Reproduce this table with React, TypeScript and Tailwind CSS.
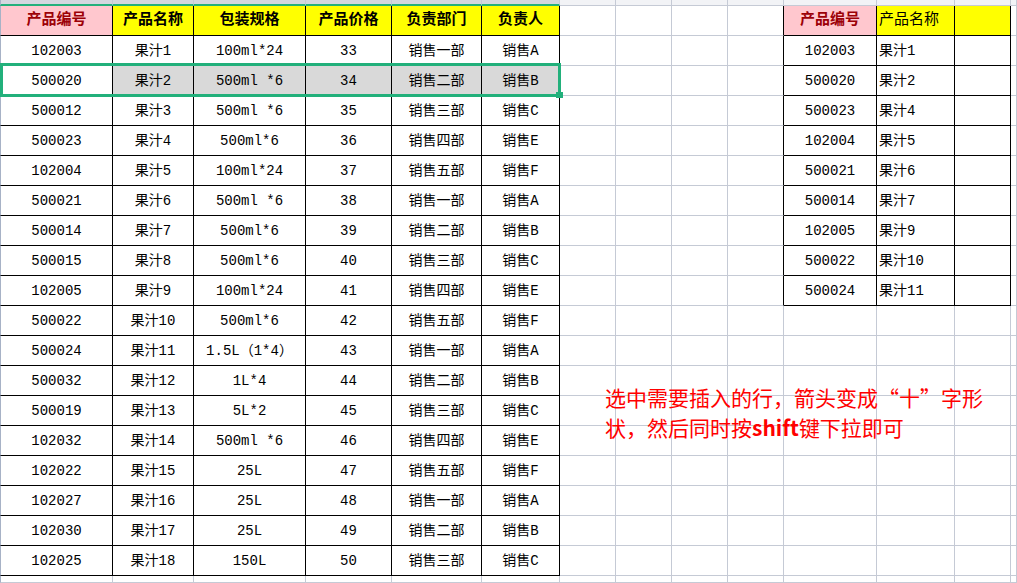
import React from "react";

const LEFT: string[][] = [
  ["102003", "果汁1", "100ml*24", "33", "销售一部", "销售A"],
  ["500020", "果汁2", "500ml *6", "34", "销售二部", "销售B"],
  ["500012", "果汁3", "500ml *6", "35", "销售三部", "销售C"],
  ["500023", "果汁4", "500ml*6", "36", "销售四部", "销售E"],
  ["102004", "果汁5", "100ml*24", "37", "销售五部", "销售F"],
  ["500021", "果汁6", "500ml *6", "38", "销售一部", "销售A"],
  ["500014", "果汁7", "500ml*6", "39", "销售二部", "销售B"],
  ["500015", "果汁8", "500ml*6", "40", "销售三部", "销售C"],
  ["102005", "果汁9", "100ml*24", "41", "销售四部", "销售E"],
  ["500022", "果汁10", "500ml*6", "42", "销售五部", "销售F"],
  ["500024", "果汁11", "1.5L（1*4）", "43", "销售一部", "销售A"],
  ["500032", "果汁12", "1L*4", "44", "销售二部", "销售B"],
  ["500019", "果汁13", "5L*2", "45", "销售三部", "销售C"],
  ["102032", "果汁14", "500ml *6", "46", "销售四部", "销售E"],
  ["102022", "果汁15", "25L", "47", "销售五部", "销售F"],
  ["102027", "果汁16", "25L", "48", "销售一部", "销售A"],
  ["102030", "果汁17", "25L", "49", "销售二部", "销售B"],
  ["102025", "果汁18", "150L", "50", "销售三部", "销售C"],
];

const RIGHT: string[][] = [
  ["102003", "果汁1"],
  ["500020", "果汁2"],
  ["500023", "果汁4"],
  ["102004", "果汁5"],
  ["500021", "果汁6"],
  ["500014", "果汁7"],
  ["102005", "果汁9"],
  ["500022", "果汁10"],
  ["500024", "果汁11"],
];

const HEAD = ["产品编号", "产品名称", "包装规格", "产品价格", "负责部门", "负责人"];

const NCOLS = 14;
const NROWS = 21;

function inTable(r: number, c: number) {
  if (r >= 1 && r <= 19 && c >= 0 && c <= 5) return true;
  if (r >= 1 && r <= 10 && c >= 10 && c <= 12) return true;
  return false;
}

function Cell({ r, c }: { r: number; c: number }) {
  const rBlack = inTable(r, c) || inTable(r, c + 1);
  let bBlack = inTable(r, c) || inTable(r + 1, c);
  const topStrip = r === 0;
  if (topStrip) bBlack = false;
  const greenBottom = topStrip && c <= 5;

  let bg = "bg-white";
  if (topStrip) bg = c <= 5 ? "bg-[#d3d7de]" : "bg-[#f2f3f6]";
  let content: React.ReactNode = null;
  let align = "justify-center";
  let text = "text-black";
  let weight = "font-normal";
  let size = "text-[14px]";

  if (r === 1 && c <= 5) {
    bg = c === 0 ? "bg-[#ffc7ce]" : "bg-[#ffff00]";
    text = c === 0 ? "text-[#9c0006]" : "text-black";
    weight = "font-bold";
    size = "text-[15px]";
    content = HEAD[c];
  } else if (r >= 2 && r <= 19 && c <= 5) {
    content = LEFT[r - 2][c];
    if (r === 3 && c >= 1) bg = "bg-[#d9d9d9]";
  } else if (r === 1 && c >= 10 && c <= 12) {
    if (c === 10) {
      bg = "bg-[#ffc7ce]";
      text = "text-[#9c0006]";
      weight = "font-bold";
      size = "text-[15px]";
      content = "产品编号";
    } else {
      bg = "bg-[#ffff00]";
      size = "text-[15px]";
      if (c === 11) {
        content = "产品名称";
        align = "justify-start pl-[2px]";
      }
    }
  } else if (r >= 2 && r <= 10 && c >= 10 && c <= 11) {
    content = RIGHT[r - 2][c - 10];
    if (c === 11) align = "justify-start pl-[2px]";
  }

  const cls = [
    "flex items-center overflow-visible whitespace-nowrap",
    align,
    bg,
    text,
    weight,
    size,
    "border-r",
    rBlack ? "border-r-black" : "border-r-[#c5cad5]",
    greenBottom ? "border-b-2 border-b-[#22b07b]" : "border-b",
    greenBottom ? "" : bBlack ? "border-b-black" : "border-b-[#c5cad5]",
    c === 0 ? "border-l border-l-[#a7b2c6]" : "",
  ].join(" ");

  return <div className={cls}>{content}</div>;
}

export default function App() {
  const cells: React.ReactNode[] = [];
  for (let r = 0; r < NROWS; r++) {
    for (let c = 0; c < NCOLS; c++) {
      cells.push(<Cell key={`${r}-${c}`} r={r} c={c} />);
    }
  }
  return (
    <div className="relative w-[1017px] h-[583px] overflow-hidden bg-white font-['Liberation_Mono','Noto_Sans_CJK_SC',monospace] leading-none">
      <div className="grid grid-cols-[113px_81px_112px_86px_90px_78px_56px_56px_56px_56px_93px_78px_56px_1fr] grid-rows-[6px_repeat(19,30px)_7px] w-full h-full">
        {cells}
      </div>
      {/* selection */}
      <div className="absolute left-0 top-[63px] w-[561px] h-[34px] border-[3px] border-[#22b07b] pointer-events-none" />
      <div className="absolute left-[556px] top-[92px] w-[7px] h-[6px] bg-[#22b07b]" />
      {/* note text box */}
      <div className="absolute left-[605px] top-[382px] text-[21px] leading-[30px] text-[#ff0000] font-['Noto_Sans_CJK_SC',sans-serif] whitespace-nowrap">
        选中需要插入的行，箭头变成“十”字形
        <br />
        状，然后同时按<span className="font-bold">shift</span>键下拉即可
      </div>
    </div>
  );
}
